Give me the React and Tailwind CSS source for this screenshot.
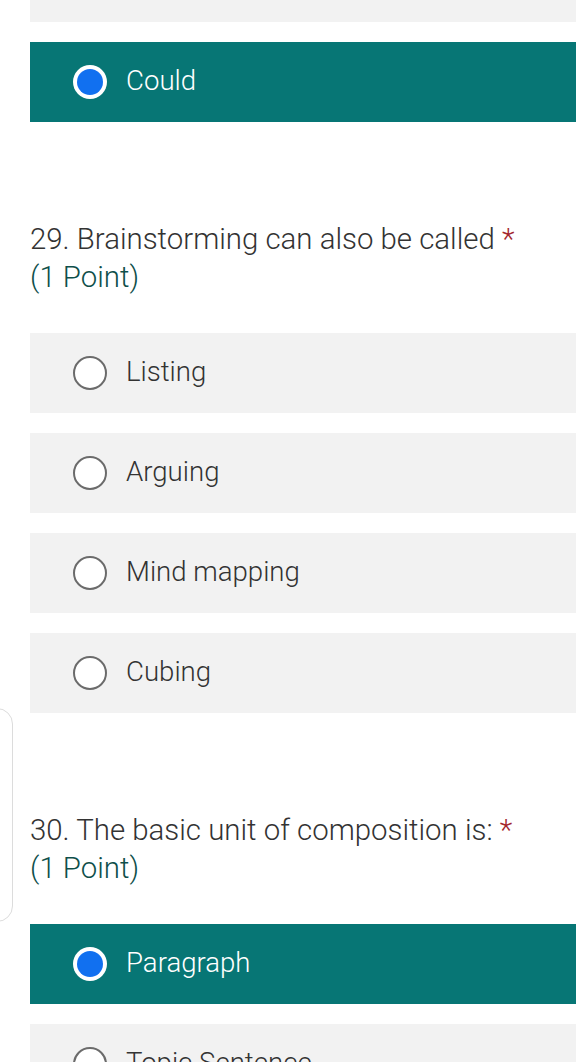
import React from "react";

function Radio({ checked }) {
  if (checked) {
    return (
      <span className="flex h-[34px] w-[34px] shrink-0 items-center justify-center rounded-full bg-white">
        <span className="h-[26px] w-[26px] rounded-full bg-[#1170f0]" />
      </span>
    );
  }
  return <span className="h-[34px] w-[34px] shrink-0 rounded-full border-2 border-[#6b6b6b] bg-white" />;
}

function Option({ label, checked }) {
  return (
    <div
      className={
        "flex h-[80px] items-center gap-[19px] pl-[43px] " +
        (checked ? "bg-[#077675] text-white" : "bg-[#f2f2f2] text-[#333333]")
      }
    >
      <Radio checked={checked} />
      <span className="-mt-[3px] text-[27.6px] leading-none">{label}</span>
    </div>
  );
}

function Question({ num, title, options }) {
  return (
    <div className="pt-[98px]">
      <div className="text-[29.4px] leading-[38px] text-[#333333]">
        {num}. {title} <span className="text-[#a4262c]">*</span>
        <br />
        <span className="text-[#0e4f4a]">(1 Point)</span>
      </div>
      <div className="mt-[37px] flex flex-col gap-5">
        {options.map((o) => (
          <Option key={o.label} label={o.label} checked={o.checked} />
        ))}
      </div>
    </div>
  );
}

export default function App() {
  return (
    <div
      className="relative h-[1062px] w-[576px] overflow-hidden bg-white font-[360]"
      style={{ fontFamily: "Roboto, 'Noto Sans', sans-serif" }}
    >
      <div className="pl-[30px]">
        <div className="flex flex-col gap-5">
          <div className="h-[22px] bg-[#f2f2f2]" />
          <Option label="Could" checked />
        </div>
        <Question
          num={29}
          title="Brainstorming can also be called"
          options={[
            { label: "Listing" },
            { label: "Arguing" },
            { label: "Mind mapping" },
            { label: "Cubing" },
          ]}
        />
        <Question
          num={30}
          title="The basic unit of composition is:"
          options={[
            { label: "Paragraph", checked: true },
            { label: "Topic Sentence" },
          ]}
        />
      </div>
      <div className="absolute left-[-30px] top-[708px] h-[214px] w-[43px] rounded-2xl border border-[#dcdcdc] bg-white" />
    </div>
  );
}
